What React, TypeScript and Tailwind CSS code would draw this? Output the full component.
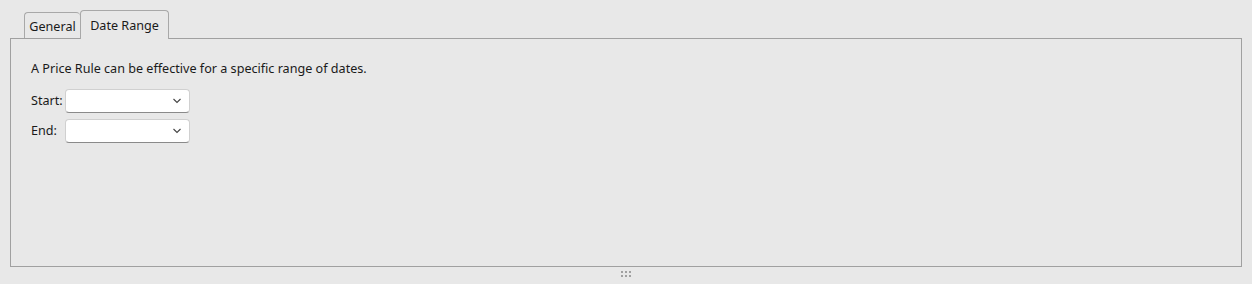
import React from 'react';

const font = { fontFamily: '"Noto Sans", "Open Sans", sans-serif' };

const DateSelect: React.FC = () => (
  <div className="relative h-[24px] w-[125px] rounded-[4px] border border-[#d0d0d0] border-b-[#8a8a8a] bg-white">
    <svg className="absolute right-[8px] top-[8px]" width="8" height="6" viewBox="0 0 8 6">
      <path d="M0.5 1 L4 4.5 L7.5 1" fill="none" stroke="#444" strokeWidth="1.1" />
    </svg>
  </div>
);

const App: React.FC = () => {
  return (
    <div className="h-[284px] w-[1252px] bg-[#e8e8e8] text-[12.6px] text-[#1a1a1a]" style={font}>
      <div className="pl-[24px] pt-[10px] flex items-end h-[38px]">
        <div className="h-[26px] w-[56px] rounded-t-[4px] border border-b-0 border-r-0 border-[#a8a8a8] flex items-center justify-center pt-[4px] text-[12.6px]">
          General
        </div>
        <div className="h-[29px] w-[89px] -mb-px relative z-10 rounded-t-[4px] border border-b-0 border-[#a8a8a8] bg-[#e8e8e8] flex items-center justify-center pt-[3px] text-[12.6px]">
          Date Range
        </div>
      </div>
      <div className="mx-[10px] h-[229px] border border-[#a0a0a0] px-[20px] pt-[22px]">
        <div className="leading-[16px]">A Price Rule can be effective for a specific range of dates.</div>
        <div className="mt-[12px] flex flex-col gap-[6px]">
          <div className="flex items-center">
            <span className="w-[34px]">Start:</span>
            <DateSelect />
          </div>
          <div className="flex items-center">
            <span className="w-[34px]">End:</span>
            <DateSelect />
          </div>
        </div>
      </div>
      <div className="flex justify-center pt-[4px]">
        <div className="grid grid-cols-3 gap-[2px]">
          {Array.from({ length: 6 }).map((_, i) => (
            <div key={i} className="h-[2px] w-[2px] bg-[#a0a0a0]" />
          ))}
        </div>
      </div>
    </div>
  );
};

export default App;
